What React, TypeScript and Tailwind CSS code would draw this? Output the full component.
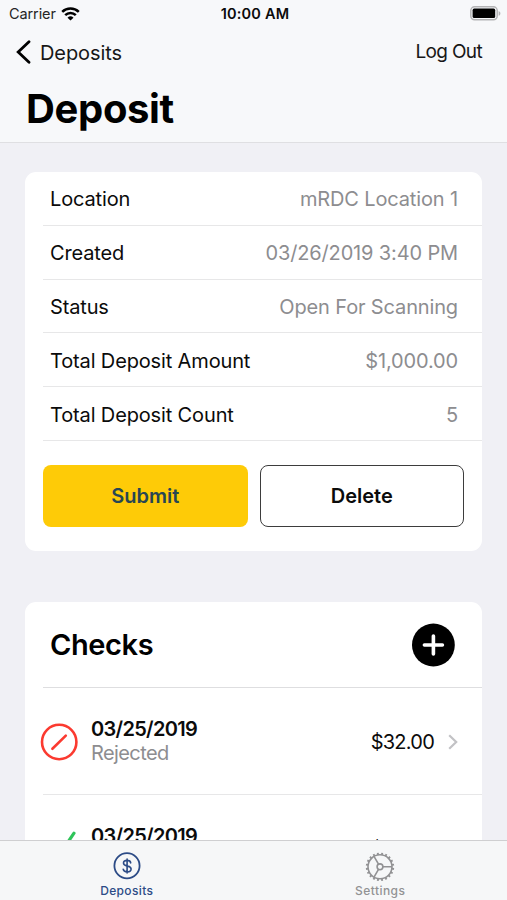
import type { ReactNode } from "react";

const details = [
  { label: "Location", value: "mRDC Location 1" },
  { label: "Created", value: "03/26/2019 3:40 PM" },
  { label: "Status", value: "Open For Scanning" },
  { label: "Total Deposit Amount", value: "$1,000.00" },
  { label: "Total Deposit Count", value: "5" },
];

const teeth = Array.from({ length: 20 }, (_, i) => i * 18);

function WifiIcon() {
  return (
    <svg width="19" height="14" viewBox="0 0 19 14" fill="none" stroke="#000" strokeWidth="2.5">
      <path d="M1.2 4.9a11.8 11.8 0 0 1 16.6 0" />
      <path d="M4.2 8.2a7.5 7.5 0 0 1 10.6 0" />
      <path d="M9.5 13.6 6.5 10.7a4.3 4.3 0 0 1 6 0z" fill="#000" stroke="none" />
    </svg>
  );
}

function BatteryIcon() {
  return (
    <svg width="31" height="15" viewBox="0 0 31 15">
      <rect x="0.8" y="0.8" width="26.4" height="13" rx="3.8" fill="#f7f8fa" stroke="#b3b3b5" strokeWidth="1.5" />
      <rect x="2.6" y="2.6" width="22.6" height="9.4" rx="1.6" fill="#000" />
      <path d="M28.6 5v4.8c1-.4 1.8-1.3 1.8-2.4s-.8-2-1.8-2.4z" fill="#b3b3b5" />
    </svg>
  );
}

function RejectedIcon() {
  return (
    <svg width="38" height="38" viewBox="0 0 38 38" fill="none" stroke="#fb3a30" strokeWidth="2.6" strokeLinecap="round">
      <circle cx="19.2" cy="19" r="17.2" />
      <path d="M12.4 25.8 25.8 12.6" />
    </svg>
  );
}

function AcceptedIcon() {
  return (
    <svg width="38" height="38" viewBox="0 0 38 38" fill="none" stroke="#2fc45a" strokeWidth="3.2" strokeLinecap="round" strokeLinejoin="round">
      <path d="M4 21 13 34 34 3.2" />
    </svg>
  );
}

function DollarIcon() {
  return (
    <svg width="28" height="28" viewBox="0 0 28 28" fill="none" stroke="#2c4b86" strokeLinecap="round">
      <circle cx="14" cy="13.8" r="12.6" strokeWidth="1.8" />
      <path d="M17.7 10.9c-.2-1.5-1.6-2.5-3.6-2.5-2.1 0-3.6 1.1-3.6 2.7 0 1.5 1.1 2.3 3.2 2.8l.9.2c2.4.5 3.5 1.4 3.5 3 0 1.8-1.5 2.8-3.9 2.8-2.2 0-3.7-1-4-2.7M14.1 7v14" strokeWidth="1.6" />
    </svg>
  );
}

function GearIcon() {
  return (
    <svg width="30" height="30" viewBox="0 0 30 30" fill="none" stroke="#929294" strokeWidth="1.6">
      <circle cx="15" cy="14.8" r="12" />
      {teeth.map((angle) => (
        <path key={angle} d="M15 2.8V.6" strokeWidth="1.9" transform={`rotate(${angle + 9} 15 14.8)`} />
      ))}
      <circle cx="15" cy="14.8" r="2.9" />
      <path d="M18 14.8h9M13.5 12.2 9 4.4M13.5 17.4 9 25.2" />
    </svg>
  );
}

function CheckRow({ icon, status }: { icon: ReactNode; status: string }) {
  return (
    <div className="ml-[18px] flex h-[107px] shrink-0 items-center border-b border-[#e7e7e8] pr-[24px]">
      <div className="-ml-[3px] mr-[13px] shrink-0 pt-[2px]">{icon}</div>
      <div className="-mt-[1px] flex-1">
        <div className="text-[20px] font-semibold leading-6 tracking-[-0.7px]">03/25/2019</div>
        <div className="text-[20px] leading-6 tracking-[-0.6px] text-[#8d8d90]">{status}</div>
      </div>
      <span className="pt-px text-[20px] tracking-[-0.75px]">$32.00</span>
      <svg className="ml-[14px] mt-px" width="10" height="16" viewBox="0 0 10 16" fill="none" stroke="#c2c2c5" strokeWidth="2.2">
        <path d="m1.2 1.2 7 6.8-7 6.8" />
      </svg>
    </div>
  );
}

export default function App() {
  return (
    <div className="flex h-[900px] w-[507px] flex-col overflow-hidden bg-[#f0f0f5] font-['Inter','Liberation_Sans',sans-serif] text-[#0b0b0b]">
      <header className="h-[143px] shrink-0 border-b border-[#dfdfe2] bg-[#f7f8fa]">
        <div className="grid h-[27px] grid-cols-3 items-center pl-[9px] pr-[6px]">
          <div className="flex items-center gap-[5px] text-[14.5px] tracking-[-0.1px] text-[#252525]">
            <span>Carrier</span>
            <WifiIcon />
          </div>
          <span className="text-center text-[14.5px] font-semibold tracking-[0.2px]">10:00 AM</span>
          <div className="flex justify-end">
            <BatteryIcon />
          </div>
        </div>
        <div className="flex h-[50px] items-center justify-between pl-4 pr-[25px] text-[20px] text-[#171717]">
          <button className="flex items-center gap-[9px]">
            <svg width="15" height="24" viewBox="0 0 15 24" fill="none" stroke="#000" strokeWidth="2.8" strokeLinecap="round">
              <path d="M13 1.8 2.2 12 13 22.2" />
            </svg>
            <span className="pt-px tracking-[-0.1px]">Deposits</span>
          </button>
          <button className="pt-px text-[19px] tracking-[-0.65px]">Log Out</button>
        </div>
        <h1 className="pl-[26px] text-[40px] font-bold leading-[64px] tracking-[-0.35px] text-black">Deposit</h1>
      </header>

      <main className="flex min-h-0 flex-1 flex-col overflow-hidden px-[25px] pt-[29px]">
        <section className="h-[379px] shrink-0 rounded-[11px] bg-white">
          {details.map((row) => (
            <div key={row.label} className="ml-[18px] flex h-[53.8px] items-center justify-between border-b border-[#e7e7e8] pl-[7px] pr-[24px] pt-[2px] text-[20px] tracking-[-0.14px]">
              <span>{row.label}</span>
              <span className="text-[#8d8d90]">{row.value}</span>
            </div>
          ))}
          <div className="mt-6 grid grid-cols-2 gap-3 pl-[18px] pr-[18px] text-[20px] font-semibold">
            <button className="h-[62px] rounded-[8px] bg-[#fecb07] text-[#274653]">Submit</button>
            <button className="h-[62px] rounded-[8px] border-[1.5px] border-[#3d3d3d]">Delete</button>
          </div>
        </section>

        <section className="mt-[51px] flex shrink-0 flex-col rounded-t-[11px] bg-white">
          <div className="ml-[18px] flex h-[86px] shrink-0 items-center justify-between border-b border-[#dedee0] pl-[7px] pr-[27px]">
            <h2 className="pt-px text-[29px] font-semibold tracking-[-0.4px] text-black">Checks</h2>
            <button className="rounded-full pt-px">
              <svg width="44" height="44" viewBox="0 0 44 44">
                <circle cx="22.4" cy="22" r="21.4" fill="#000" />
                <path d="M22.4 13v18M13.4 22h18" stroke="#fff" strokeWidth="3.6" strokeLinecap="round" />
              </svg>
            </button>
          </div>
          <CheckRow icon={<RejectedIcon />} status="Rejected" />
          <CheckRow icon={<AcceptedIcon />} status="Accepted" />
        </section>
      </main>

      <nav className="grid h-[60px] shrink-0 grid-cols-2 border-t border-[#cfcfd1] bg-[#f6f7f8] text-[12px] font-medium">
        <button className="flex flex-col items-center pt-[11px] text-[#2c4b86]">
          <DollarIcon />
          <span className="-mt-px leading-6 tracking-[0.35px]">Deposits</span>
        </button>
        <button className="flex flex-col items-center pt-[11px] text-[#929294]">
          <GearIcon />
          <span className="-mt-[3px] leading-6 tracking-[0.45px]">Settings</span>
        </button>
      </nav>
    </div>
  );
}
